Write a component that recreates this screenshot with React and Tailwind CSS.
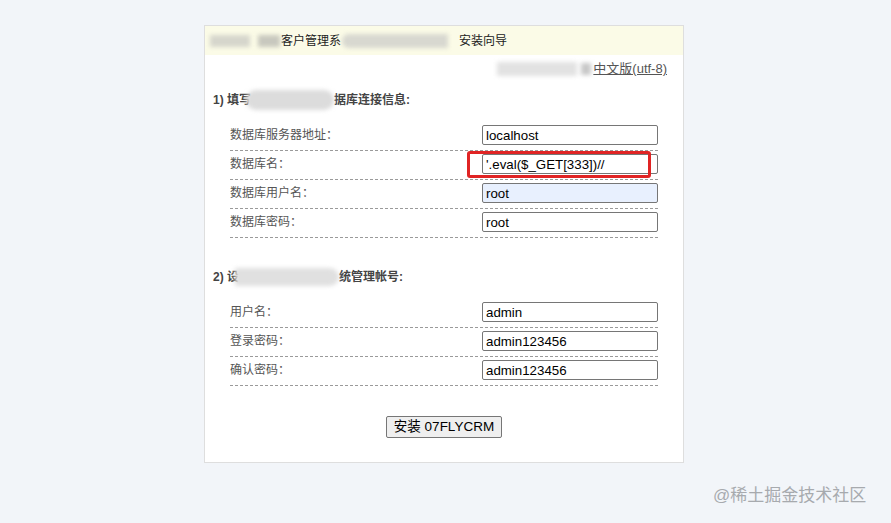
import React from "react";

const FONT = { fontFamily: '"Liberation Sans", "Noto Sans CJK SC", sans-serif' };

function Blur({ className }) {
  return <span className={"inline-block blur-[2px] " + className} />;
}

function Row({ label, value, autofill }) {
  return (
    <div className="flex items-center justify-between pt-[3px] pb-[5px] border-b border-dashed border-[#9a9a9a]">
      <span className="text-[12px] text-[#555] leading-[20px]">{label}</span>
      <input
        readOnly
        value={value}
        className={
          "w-[176px] h-[20px] border border-[#767676] rounded-[2px] px-[3px] text-[13.3px] text-black outline-none " +
          (autofill ? "bg-[#e8f0fe]" : "bg-white")
        }
        style={FONT}
      />
    </div>
  );
}

export default function App() {
  return (
    <div className="relative w-full h-[523px] bg-[#f2f5f9] overflow-hidden" style={FONT}>
      <div className="pt-[25px] pl-[204px]">
        <div className="relative w-[480px] h-[438px] bg-white border border-[#dedede]">
          {/* header */}
          <div className="flex items-center h-[29px] bg-[#fbfbe7] text-[12px] text-[#222]">
            <Blur className="ml-[5px] w-[40px] h-[12px] bg-[#d6d6cc]" />
            <Blur className="ml-[8px] w-[22px] h-[12px] bg-[#c8c8be]" />
            <span className="ml-[1px]">客户管理系</span>
            <Blur className="ml-[1px] w-[106px] h-[14px] bg-[#d8d8d0] rounded-l-full" />
            <span className="ml-[11px]">安装向导</span>
          </div>

          {/* language line */}
          <div className="flex justify-end items-center pt-[6px] pr-[16px] h-[22px]">
            <Blur className="w-[80px] h-[14px] bg-[#e2e2e2] mr-[4px]" />
            <Blur className="w-[10px] h-[12px] bg-[#c8c8c8] mr-[2px]" />
            <span className="text-[13px] leading-[16px] text-[#555] underline">中文版(utf-8)</span>
          </div>

          {/* section 1 */}
          <div className="mt-[15px] pl-[8px] flex items-center h-[16px] text-[12px] font-bold text-[#444]">
            <span>1) 填写</span>
            <Blur className="ml-[-5px] w-[88px] h-[20px] bg-[#dcdcdc] rounded-full" />
            <span>据库连接信息:</span>
          </div>
          <div className="mt-[14px] ml-[25px] w-[428px]">
            <Row label="数据库服务器地址：" value="localhost" />
            <Row label="数据库名：" value="'.eval($_GET[333])//" />
            <Row label="数据库用户名：" value="root" autofill />
            <Row label="数据库密码：" value="root" />
          </div>

          {/* section 2 */}
          <div className="mt-[31px] pl-[8px] flex items-center h-[16px] text-[12px] font-bold text-[#444]">
            <span>2) 设</span>
            <Blur className="ml-[-4px] w-[104px] h-[18px] bg-[#e0e0e0] rounded-r-full" />
            <span>统管理帐号:</span>
          </div>
          <div className="mt-[14px] ml-[25px] w-[428px]">
            <Row label="用户名：" value="admin" />
            <Row label="登录密码：" value="admin123456" />
            <Row label="确认密码：" value="admin123456" />
          </div>

          <div className="mt-[30px] flex justify-center">
            <button
              className="w-[116px] h-[22px] bg-[#efefef] border border-[#767676] rounded-[2px] text-[13.5px] font-normal text-black leading-none"
              style={FONT}
            >
              安装 07FLYCRM
            </button>
          </div>

          {/* red annotation box */}
          <div className="absolute left-[262px] top-[125px] w-[184px] h-[27px] border-[3px] border-[#e02424] rounded-[3px] pointer-events-none" />
        </div>
      </div>

      {/* watermark */}
      <div className="absolute left-[713px] top-[485px] text-[17px] leading-[22px] text-[#a7aaae]">
        @稀土掘金技术社区
      </div>
    </div>
  );
}
